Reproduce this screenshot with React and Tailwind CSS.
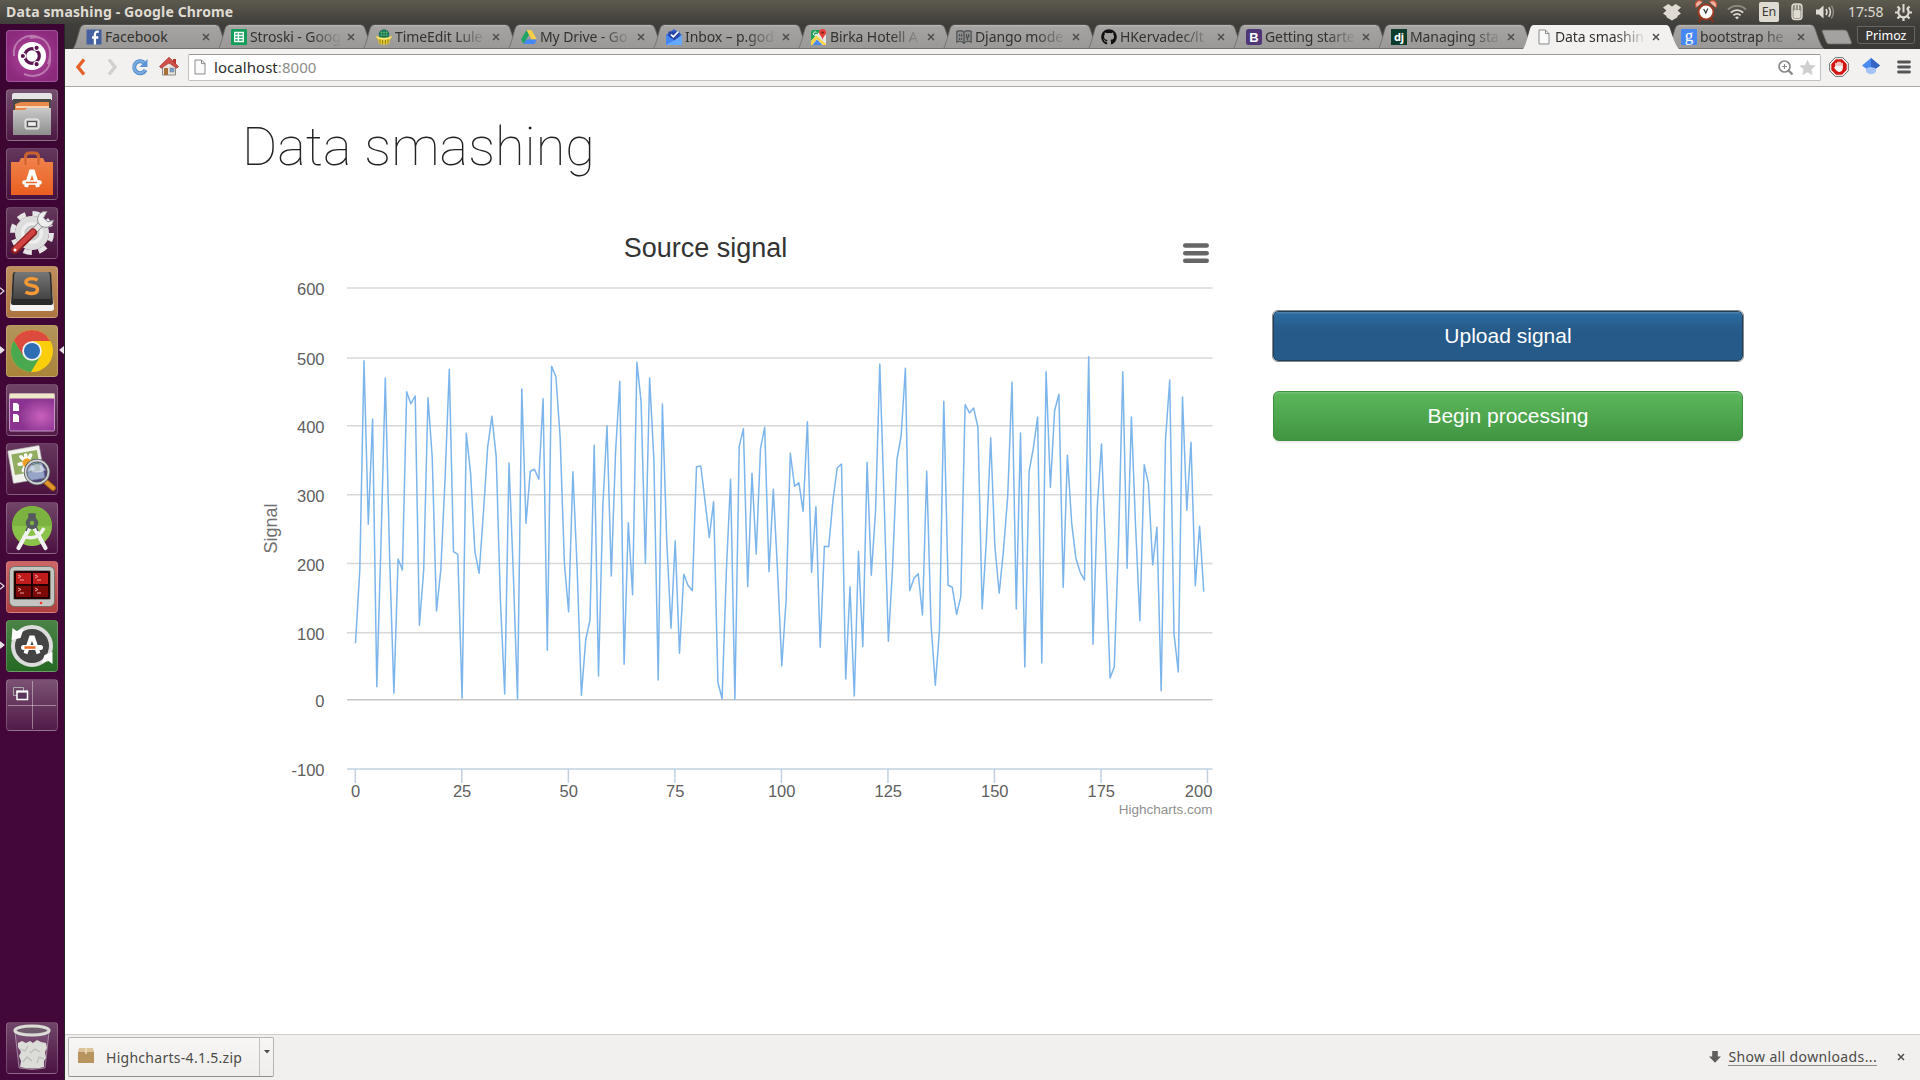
import React from "react";
import { FaGithub } from "react-icons/fa";

const SERIES = [
  910, 690, 62, 553, 237, 1040, 600, 114, 650, 1060, 657, 690, 155, 191, 168, 856, 690, 173, 350, 813,
  690, 420, 88, 635, 643, 1075, 280, 400, 635, 700, 520, 320, 229, 350, 780, 1062, 369, 690, 1077, 147,
  550, 394, 388, 418, 176, 931, 79, 110, 290, 670, 815, 395, 690, 1066, 900, 840, 316, 1008, 500, 257,
  708, 340, 124, 973, 548, 764, 67, 185, 670, 114, 360, 1020, 192, 600, 865, 602, 940, 703, 736, 752,
  380, 378, 485, 592, 485, 1027, 1076, 690, 418, 1078, 320, 266, 740, 400, 642, 325, 262, 695, 448, 690,
  977, 780, 340, 439, 428, 514, 245, 697, 500, 922, 619, 620, 480, 384, 372, 1017, 740, 1068, 634, 920,
  367, 706, 510, 72, 480, 904, 680, 360, 285, 85, 752, 715, 701, 825, 394, 850, 1036, 870, 184, 736,
  742, 823, 770, 194, 219, 204, 262, 806, 600, 293, 620, 760, 630, 470, 127, 807, 279, 981, 394, 325,
  231, 969, 95, 442, 212, 163, 742, 346, 550, 655, 697, 720, 50, 913, 500, 312, 650, 1014, 980, 600,
  95, 685, 231, 560, 842, 374, 430, 675, 562, 1052, 300, 120, 880, 996, 171, 511, 307, 737, 559, 755,
];

const GRID = [
  ["600", 288],
  ["500", 358],
  ["400", 425.7],
  ["300", 494.7],
  ["200", 563.5],
  ["100", 632.7],
  ["0", 699.7],
];

function Chart() {
  const points = SERIES.map((v, i) => `${(355.5 + i * 4.263).toFixed(1)},${(340 + v / 3).toFixed(1)}`).join(" ");
  return (
    <svg width="985" height="600" viewBox="242 225 985 600" className="block font-['Liberation_Sans',Arial,sans-serif]">
      <text x="705.5" y="257" textAnchor="middle" fontSize="27" fill="#333">Source signal</text>
      <g stroke="#666" strokeWidth="4.5" strokeLinecap="round">
        <path d="M1185.2 245.6h21.5M1185.2 253.200h21.500M1185.200 260.800h21.500" />
      </g>
      {GRID.map(([label, y]) => (
        <g key={label}>
          <path d={`M347 ${y}H1212.6`} stroke={label === "0" ? "#c6c6c6" : "#d8d8d8"} strokeWidth="1.5" />
          <text x="324.5" y={y + 7.3} textAnchor="end" fontSize="16.5" fill="#606060">{label}</text>
        </g>
      ))}
      <text x="324.5" y="776" textAnchor="end" fontSize="16.5" fill="#606060">-100</text>
      <path d="M347 769H1212.6" stroke="#c0d0e0" strokeWidth="1.5" />
      {[0, 25, 50, 75, 100, 125, 150, 175, 200].map((v) => (
        <g key={v}>
          <path d={`M${355.3 + v * 4.261} 769v14`} stroke="#c0d0e0" strokeWidth="1.5" />
          <text
            x={v === 200 ? 1212.4 : 355.6 + v * 4.261}
            y="796.7"
            textAnchor={v === 200 ? "end" : "middle"}
            fontSize="16.5"
            fill="#606060"
          >
            {v}
          </text>
        </g>
      ))}
      <text transform="translate(276.500 528.5) rotate(-90)" textAnchor="middle" fontSize="18" fill="#707070">Signal</text>
      <text x="1212.6" y="814" textAnchor="end" fontSize="13.5" fill="#909090">Highcharts.com</text>
      <polyline points={points} fill="none" stroke="#7cb5ec" strokeWidth="1.5" strokeLinejoin="round" />
    </svg>
  );
}

/* ---------- favicons ---------- */
const Fav = ({ children }) => (
  <svg width="16" height="16" viewBox="0 0 16 16" className="shrink-0">{children}</svg>
);
const PageIcon = () => (
  <Fav>
    <path d="M3 1h6.5L13 4.6V15H3z" fill="#fafafa" stroke="#8b8b8b" />
    <path d="M9.5 1v3.6H13" fill="none" stroke="#8b8b8b" />
  </Fav>
);
const FacebookIcon = () => (
  <Fav>
    <rect x=".5" y=".5" width="15" height="15" fill="#4460a0" />
    <path d="M12.800 2.800C9.800 2.300 8.900 3.500 8.900 5.800V15.500M6 8.500h6.300" fill="none" stroke="#fff" strokeWidth="2.300" />
  </Fav>
);
const SheetsIcon = () => (
  <Fav>
    <rect width="16" height="16" rx="1" fill="#129d58" />
    <path d="M3.700 3.500h8.600v9H3.700zM3.700 6.500h8.600M3.700 9.500h8.600M7.400 3.500v9" fill="none" stroke="#fff" strokeWidth="1.300" />
  </Fav>
);
const TimeEditIcon = () => (
  <Fav>
    <circle cx="8" cy="5.500" r="5.300" fill="#16705c" />
    <path d="M4 3.500h8M3.500 6h9M8 1v7M5.500 1.500v6M10.500 1.500v6" stroke="#6cc76a" strokeWidth=".5" />
    <path d="M0 6.500c4 3 12 3 16 0-.3 2.500-1.500 4-2.500 4.500V14c-2 2.300-9 2.300-11 0v-3C1.500 10.500.3 9 0 6.500z" fill="#e9cf34" />
    <path d="M4 10.500v4M6.600 11v4M9.400 11v4M12 10.500v4" stroke="#7c6d10" strokeWidth=".9" />
    <path d="M1 8c4 2.400 10 2.400 14 0" stroke="#fff6a0" fill="none" />
  </Fav>
);
const DriveIcon = () => (
  <Fav>
    <path d="M5.400 1.200h5.200L16 10.400h-5.200z" fill="#ffcf48" />
    <path d="M5.400 1.200L8 5.700 2.700 15 0 10.400z" fill="#1da362" />
    <path d="M5.300 10.400H16L13.400 15H2.700z" fill="#4587f4" />
  </Fav>
);
const InboxIcon = () => (
  <Fav>
    <path d="M0 6L8 0l8 6-8 6z" fill="#3367d6" />
    <path d="M2.500 2.500h11v6.500L8 13 2.500 9z" fill="#2748a8" />
    <path d="M0 6l8 5.500L16 6v10H0z" fill="#64a8fa" />
    <path d="M0 6l8 5.500L0 16z" fill="#4285f4" />
    <path d="M5 5.500l2.300 2.300L12.500 2.500" fill="none" stroke="#fff" strokeWidth="1.700" />
  </Fav>
);
const MapsIcon = () => (
  <Fav>
    <rect y="1" width="15" height="15" rx="1.500" fill="#e8e8e8" />
    <path d="M0 2.500Q0 1 1.500 1H10L0 12z" fill="#24a05a" />
    <path d="M0 12L5.500 6.500 15 15v1H12L6 10 1.500 16H0z" fill="#ffd447" />
    <path d="M1.500 16L6 10.500 11.500 16z" fill="#4a88f0" />
    <path d="M11.600 0a3.600 3.600 0 0 1 3.600 3.600c0 2.500-3 3.900-3.600 7.400-.6-3.500-3.600-4.900-3.600-7.400A3.600 3.600 0 0 1 11.600 0z" fill="#e5433a" />
    <circle cx="11.600" cy="3.600" r="1.200" fill="#7c1a16" />
    <path d="M5.500 3.500a1.800 1.800 0 1 0 .3 2H4.200" fill="none" stroke="#fff" strokeWidth=".9" />
  </Fav>
);
const BookIcon = () => (
  <Fav>
    <path d="M.8 2.500C3 1.500 6 1.500 8 3c2-1.500 5-1.500 7.200-.5V13c-2.200-1-5.200-.5-7.200 1-2-1.500-5-2-7.200-1z" fill="#8d8d8c" stroke="#57595b" strokeWidth="1.400" />
    <path d="M8 3v12M3.500 5v2.500M5.500 5v2.500M3.500 9v2M5.500 9v2M10.500 5v3l1 1v2.500M12.700 5v2.500l-1 1" fill="none" stroke="#4b4d4f" strokeWidth="1.200" />
  </Fav>
);
const BootstrapIcon = () => (
  <Fav>
    <rect width="16" height="16" rx="2.500" fill="#4f3677" />
    <text x="8" y="12.800" fontSize="13" fontWeight="bold" textAnchor="middle" fill="#fff" fontFamily="Liberation Sans">B</text>
  </Fav>
);
const DjangoIcon = () => (
  <Fav>
    <rect width="16" height="16" fill="#0c3c2b" />
    <text x="8" y="11.800" fontSize="11" fontWeight="bold" textAnchor="middle" fill="#fff" fontFamily="Noto Sans">dj</text>
  </Fav>
);
const GoogleIcon = () => (
  <Fav>
    <rect width="16" height="16" rx="1" fill="#4787f3" />
    <text x="8" y="11.500" fontSize="17" textAnchor="middle" fill="#fff" fontFamily="Liberation Serif">g</text>
  </Fav>
);

const TABS = [
  { title: "Facebook", icon: <FacebookIcon /> },
  { title: "Stroski - Goog", icon: <SheetsIcon /> },
  { title: "TimeEdit Lule", icon: <TimeEditIcon /> },
  { title: "My Drive - Go", icon: <DriveIcon /> },
  { title: "Inbox – p.god", icon: <InboxIcon /> },
  { title: "Birka Hotell A", icon: <MapsIcon /> },
  { title: "Django mode", icon: <BookIcon /> },
  { title: "HKervadec/lt", icon: <FaGithub className="size-4 shrink-0 text-[#111]" /> },
  { title: "Getting starte", icon: <BootstrapIcon /> },
  { title: "Managing sta", icon: <DjangoIcon /> },
  { title: "Data smashin", icon: <PageIcon />, active: true },
  { title: "bootstrap he", icon: <GoogleIcon /> },
];

function CloseX({ className }) {
  return (
    <svg width="8" height="8" viewBox="0 0 8 8" className={className}>
      <path d="M1 1l6 6M7 1L1 7" stroke="#4e4d4b" strokeWidth="1.500" />
    </svg>
  );
}

function Tab({ title, icon, active }) {
  return (
    <div className={active ? "relative z-10 -mr-[11px] h-[25px] w-[156px] shrink-0" : "relative -mr-[11px] h-[25px] w-[156px] shrink-0"}>
      <svg width="156" height="25" viewBox="0 0 156 25" className="absolute inset-0">
        <defs>
          <linearGradient id="tabfill" x2="0" y2="1">
            <stop offset="0" stopColor="#a5a4a2" />
            <stop offset="1" stopColor="#999896" />
          </linearGradient>
        </defs>
        <path
          d="M0 25C3 22 6 7 7.500 3.500 8.500 1.500 9.500 1 11.500 1h131c2 0 3 .5 4 2.500C148 7 152 22 156 25z"
          fill={active ? "#f2f1f0" : "url(#tabfill)"}
          stroke={active ? "none" : "#6b6a67"}
          strokeWidth=".8"
        />
        {!active && <path d="M11 1.700h132" stroke="#c4c3c1" strokeWidth=".9" />}
        {!active && <path d="M0 24.500h156" stroke="#73726e" />}
      </svg>
      <div className="relative flex h-full items-center pt-px pl-[13px]">
        {icon}
        <span
          className={
            title === "Facebook"
              ? "ml-[3px] w-[92px] text-[14px] leading-5 whitespace-nowrap text-[#33322e]"
              : "ml-[3px] w-[92px] text-[14px] leading-5 tracking-[-0.1px] whitespace-nowrap text-[#33322e] [mask-image:linear-gradient(to_right,#000_66%,transparent)]"
          }
        >
          {title}
        </span>
        <CloseX className="ml-[5px]" />
      </div>
    </div>
  );
}

/* ---------- launcher ---------- */
const ICONS = {
  dash: (
    <>
      <path d="M8 26C6 10 22 2 34 8M44 26c2 15-12 24-26 18M24 8C40 4 48 18 42 34" fill="none" stroke="#fff" strokeOpacity=".35" strokeWidth="2" />
      <circle cx="26" cy="26" r="14" fill="#fff" />
      <circle cx="26" cy="26" r="7.300" fill="none" stroke="#5e1452" strokeWidth="3.200" />
      <g fill="#5e1452" stroke="#fff" strokeWidth="1.200">
        <circle cx="16.800" cy="26" r="2.700" />
        <circle cx="30.600" cy="17.800" r="2.700" />
        <circle cx="30.600" cy="34.200" r="2.700" />
      </g>
    </>
  ),
  files: (
    <>
      <path d="M6 6q0-2 2-2h36q2 0 2 2v5H6z" fill="#e4e4e4" />
      <path d="M7 10h38v14H7z" fill="#4a4a48" />
      <path d="M9 15l6-2h28v10H9z" fill="#e8894a" />
      <path d="M10 18h33" stroke="#fff0dc" strokeWidth="1.500" />
      <path d="M7 21h12l2-2h24v27H7z" fill="url(#silver)" />
      <rect x="19" y="30" width="14" height="10" rx="2" fill="#ccc" stroke="#eee" />
      <rect x="21.500" y="32.500" width="9" height="5" fill="#eee" stroke="#555" strokeWidth="1.300" />
    </>
  ),
  software: (
    <>
      <path d="M19.500 17V9q0-4 4-4h5q4 0 4 4v8" fill="none" stroke="#d0693a" strokeWidth="3" />
      <path d="M5 14h8l2-4h22l2 4h8v33H5z" fill="url(#bag)" />
      <path d="M19.500 17V9q0-4 4-4h5q4 0 4 4v8" fill="none" stroke="#c9602c" strokeWidth="1.800" />
      <path d="M20 39L25 23.500h2L32 39" fill="none" stroke="#fff" strokeWidth="4" />
      <path d="M18.500 34.500h15" stroke="#fff" strokeWidth="4.600" strokeLinecap="round" />
      <path d="M20 34.500h11" stroke="#e9662c" strokeWidth="1.500" />
    </>
  ),
  settings: (
    <>
      <circle cx="26" cy="26" r="19.500" fill="none" stroke="#e4e4e4" strokeWidth="5" strokeDasharray="8.300 7" />
      <circle cx="26" cy="26" r="14" fill="#eee" stroke="#ddd" strokeWidth="6" />
      <circle cx="26" cy="26" r="7" fill="#cfcfcf" stroke="#bbb" />
      <path d="M27 25L39 13" stroke="#8f8f8f" strokeWidth="6.500" />
      <path d="M27 25L39 13" stroke="#e6e6e6" strokeWidth="4.800" />
      <path d="M41 4.500a8 8 0 1 0 6.500 8.500l-5.500 2-4.500-4z" fill="#efefef" stroke="#8f8f8f" />
      <path d="M9 43L27 25.500" stroke="#8e1f1f" strokeWidth="8" strokeLinecap="round" />
      <path d="M9.500 42L27 25" stroke="#d04343" strokeWidth="5" strokeLinecap="round" />
      <circle cx="9" cy="43" r="1.500" fill="#fff" />
    </>
  ),
  sublime: (
    <>
      <path d="M7 12L4 42q0 3 3 3h38q3 0 3-3L45 12z" fill="#f3f3f3" />
      <path d="M9 6h34q2 0 2.200 2l1.800 29q0 2-2 2H7q-2 0-2-2L6.800 8q.2-2 2.200-2z" fill="#2b2b2b" />
      <path d="M10.500 6h31q2 0 2.200 2l1.300 25H7L8.300 8q.2-2 2.200-2z" fill="url(#key)" />
      <path d="M31.500 14c-5-2.500-12-1.500-11.500 2.500.5 4.500 11.500 1.500 11.500 7 0 4.500-7.500 5-12 2.500" fill="none" stroke="#f79a35" strokeWidth="3.400" />
    </>
  ),
  chrome: (
    <>
      <circle cx="26" cy="26" r="21" fill="#fbce0b" />
      <path d="M26 5A21 21 0 0 0 7.800 15.500L17 31.500 26 16h18.200A21 21 0 0 0 26 5z" fill="#dd4b3e" />
      <path d="M7.800 15.500A21 21 0 0 0 25 47l9.500-16L26 26l-8.500 5z" fill="#4aa84e" />
      <circle cx="26" cy="26" r="9.800" fill="#f4f4f4" />
      <circle cx="26" cy="26" r="8" fill="#2f6db5" />
    </>
  ),
  desktop: (
    <>
      <rect x="3.500" y="10" width="45" height="37" rx="1.500" fill="url(#screen)" stroke="#c79acb" />
      <path d="M3.500 9.500h45v5h-45z" fill="#ece8c8" />
      <path d="M7 19h4l2 2v6H7zM7 30h4l2 2v6H7z" fill="#fff" />
    </>
  ),
  viewer: (
    <>
      <g transform="rotate(-10 20 20)">
        <rect x="4" y="5" width="32" height="33" rx="1" fill="#f2f2ee" stroke="#aaa" strokeWidth=".6" />
        <rect x="7" y="9" width="26" height="21" fill="#93ad62" />
        <g stroke="#fff" strokeWidth="3.500" strokeLinecap="round">
          <path d="M13 20h17M16 13l10 14M26 13L16 27M21 12v16" />
        </g>
        <circle cx="21" cy="20" r="4.500" fill="#f0a020" />
      </g>
      <path d="M39 38l8 7" stroke="#9a5a10" strokeWidth="6" strokeLinecap="round" />
      <path d="M39 38l8 7" stroke="#e0952e" strokeWidth="4" strokeLinecap="round" />
      <circle cx="31" cy="29" r="11.500" fill="#4a65a8" fillOpacity=".55" stroke="#55585c" strokeWidth="3.400" />
      <circle cx="31" cy="29" r="11.500" fill="none" stroke="#d0d3d6" strokeWidth="1.800" />
      <path d="M22 27q9-12 18 0-9 5-18 0z" fill="#fff" fillOpacity=".5" />
    </>
  ),
  studio: (
    <>
      <circle cx="26" cy="24" r="20" fill="#8bc34a" />
      <path d="M6 24a20 20 0 0 1 40 0z" fill="#7cb23f" />
      <path d="M23.500 26L12.500 46M28.500 26l11 20" stroke="#f1f1f1" strokeWidth="4.200" strokeLinecap="round" />
      <path d="M17 34q14 6 21-8" fill="none" stroke="#f1f1f1" strokeWidth="3.500" />
      <path d="M23 12h6v5h-6zM22 24l-2 5M30 24l2 5" fill="#54595f" stroke="#54595f" strokeWidth="1.500" />
      <circle cx="26" cy="21" r="4.200" fill="#7cb23f" stroke="#54595f" strokeWidth="4" />
    </>
  ),
  terminator: (
    <>
      <rect x="3.500" y="5.500" width="45" height="40" rx="5" fill="#c4c4c0" stroke="#70706c" />
      <rect x="7.500" y="9.500" width="37" height="29" rx="1.500" fill="#200" stroke="#8a8a86" />
      <path d="M10 12h15v11H10zM27 12h15v11H27z" fill="#c01c1c" />
      <path d="M10 25h15v11H10zM27 25h15v11H27z" fill="#7c0808" />
      <path d="M12 14l3 1.500L12 17M14 19h4M29 14l3 1.500L29 17M31 19h4M12 27l3 1.500L12 30M14 32h4M29 27l3 1.500L29 30M31 32h4" fill="none" stroke="#f6a0a0" />
      <circle cx="35" cy="42" r="1.300" fill="#f33" />
    </>
  ),
  updater: (
    <>
      <circle cx="26" cy="26" r="19" fill="#444" stroke="#dcdcdc" strokeWidth="4" />
      <path d="M5.500 20l1-12 4 3 7-2-3 9zM46.500 32v12l-4-3-7 2 3-8z" fill="#fff" />
      <path d="M19.500 33.500L25 17.500h2L32.500 33.500" fill="none" stroke="#fff" strokeWidth="4" />
      <path d="M17.500 27.500h17" stroke="#fff" strokeWidth="5" strokeLinecap="round" />
      <path d="M18.500 27.500h11" stroke="#f26a21" strokeWidth="2.600" />
    </>
  ),
  workspaces: (
    <>
      <path d="M26.500 2v48M2 26.500h48" stroke="#fff" strokeOpacity=".4" />
      <path d="M7.500 8.500h10v8h-10z" fill="#6a4567" stroke="#aaa" />
      <path d="M11 12.500h10.500v8H11z" fill="#5b3559" stroke="#fff" strokeWidth="1.500" />
      <path d="M10.500 12.500h11.500" stroke="#fff" strokeWidth="2" />
    </>
  ),
  trash: (
    <>
      <path d="M9 10h34l-4 36q-13 3-26 0z" fill="#fff" fillOpacity=".1" stroke="#fff" strokeOpacity=".4" />
      <path d="M12 21l4-2 4 2 4-2 3 2 4-3 4 2 5 1 1 5-2 4 1 6-2 3 0 6q-11 3-24 0l1-6-2-5 2-4-3-5z" fill="#dcdcd8" />
      <path d="M14 27l5 2 3-5M17 40l4-5 5 4M24 31l5-4 5 3M31 41l2-6 5 2" fill="none" stroke="#bcbcb8" strokeWidth="1.300" />
      <ellipse cx="26" cy="8.500" rx="17" ry="4.500" fill="#6f5d6d" stroke="#dcdcd6" strokeWidth="3.200" />
    </>
  ),
};

const LAUNCHER = [
  { id: "dash", bg: "bg-[radial-gradient(circle,#b84ba3,#8c2a7c_75%)]" },
  { id: "files", bg: "bg-linear-to-b from-white/30 to-white/8" },
  { id: "software", bg: "bg-linear-to-b from-white/20 to-white/5" },
  { id: "settings", bg: "bg-linear-to-b from-white/20 to-white/5" },
  { id: "sublime", bg: "bg-linear-to-b from-[#c08f5e] to-[#ab7440]", left: "open" },
  { id: "chrome", bg: "bg-linear-to-b from-[#b3945c] to-[#a98539]", left: "full", right: true },
  { id: "desktop", bg: "bg-linear-to-b from-white/25 to-white/8" },
  { id: "viewer", bg: "bg-linear-to-b from-white/20 to-white/5" },
  { id: "studio", bg: "bg-linear-to-b from-white/25 to-white/5" },
  { id: "terminator", bg: "bg-linear-to-b from-[#cc6664] to-[#b04040]", left: "open" },
  { id: "updater", bg: "bg-linear-to-b from-[#4b8347] to-[#256a22]", left: "full" },
  { id: "workspaces", bg: "bg-linear-to-b from-white/30 to-white/8" },
];

function Tile({ id, bg, left, right }) {
  return (
    <div className="relative flex h-[52px] w-full shrink-0 pl-1.5">
      {left && (
        <svg width="5" height="8" viewBox="0 0 5 8" className="absolute top-[21px] left-0">
          <path d="M0 .7L4 4 0 7.300" fill={left === "full" ? "#e8e4e8" : "none"} stroke="#e8e4e8" strokeWidth="1.100" />
        </svg>
      )}
      <div className={`size-[52px] overflow-hidden rounded-[4px] border border-white/20 ${bg}`}>
        <svg width="52" height="52" viewBox="0 0 52 52" className="-mt-px -ml-px">{ICONS[id]}</svg>
      </div>
      {right && (
        <svg width="5" height="8" viewBox="0 0 5 8" className="absolute top-[21px] left-[59px]">
          <path d="M5 0L0 4l5 4z" fill="#e8e4e8" />
        </svg>
      )}
    </div>
  );
}

function Launcher() {
  return (
    <aside className="flex w-[65px] shrink-0 flex-col justify-between border-r border-[#2a2328] bg-linear-to-b from-[#3b0531] via-[#430738] to-[#420839] pt-1.5 pb-1.5">
      <svg width="0" height="0" className="absolute">
        <defs>
          <linearGradient id="silver" x2="0" y2="1"><stop stopColor="#c9c9c9" /><stop offset="1" stopColor="#8e8e8e" /></linearGradient>
          <linearGradient id="bag" x2="0" y2="1"><stop stopColor="#f0824b" /><stop offset="1" stopColor="#e95f20" /></linearGradient>
          <linearGradient id="key" x2="0" y2="1"><stop stopColor="#777" /><stop offset="1" stopColor="#444" /></linearGradient>
          <radialGradient id="screen" cx=".7" cy=".6"><stop stopColor="#c862be" /><stop offset="1" stopColor="#8a3390" /></radialGradient>
        </defs>
      </svg>
      <div className="flex flex-col gap-[7px]">
        {LAUNCHER.map((t) => <Tile key={t.id} {...t} />)}
      </div>
      <Tile id="trash" bg="bg-linear-to-b from-white/25 to-white/5" />
    </aside>
  );
}

/* ---------- top panel ---------- */
function TopPanel() {
  return (
    <header className="flex h-6 shrink-0 items-center justify-between bg-linear-to-b from-[#5d5a50] to-[#403f3a] pr-2 pl-1.5 text-[#dfdbd2]">
      <span className="text-[14px] leading-6 font-bold tracking-[0.14px]">Data smashing - Google Chrome</span>
      <div className="flex items-center">
        <svg width="18" height="18" viewBox="0 0 18 18" className="mr-[14px]">
          <path d="M5.200 1L9 3.600 12.800 1 18 4.600 14.600 7.600 18 10.600 14.500 13v1.200L9 17.500l-5.500-3.300V13L0 10.600l3.400-3L0 4.600z" fill="#dfdbd2" />
        </svg>
        <svg width="22" height="24" viewBox="0 0 22 24" className="mr-2.5">
          <path d="M1.500 7.500a4 4 0 0 1 6-5.500M20.500 7.500a4 4 0 0 0-6-5.500" fill="#f3b0a0" stroke="#c4523a" strokeWidth="1.300" />
          <path d="M6 18l-2 4M16 18l2 4" stroke="#8c2f1d" strokeWidth="2" />
          <circle cx="11" cy="12" r="7.500" fill="#fff" stroke="#9c3a22" strokeWidth="2" />
          <path d="M8.700 9l2.100 4 2-4.500" fill="none" stroke="#333" strokeWidth="1.200" />
        </svg>
        <svg width="20" height="16" viewBox="0 0 20 16" className="mr-3">
          <g fill="none" strokeWidth="1.900">
            <path d="M1 5.500a13 13 0 0 1 18 0" stroke="#8f8c84" />
            <path d="M3.800 8.600a9 9 0 0 1 12.400 0" stroke="#dfdbd2" />
            <path d="M6.400 11.400a5.200 5.200 0 0 1 7.200 0" stroke="#dfdbd2" />
          </g>
          <path d="M8 13.300q2-1.600 4 0l-2 2.200z" fill="#dfdbd2" />
        </svg>
        <span className="flex h-5 w-5 items-center justify-center rounded-[2px] bg-[#dfdbd2] text-[12.500px] text-[#3c3b37]">En</span>
        <svg width="12" height="18" viewBox="0 0 12 18" className="mx-3">
          <rect x="1" y="1" width="10" height="15.500" rx="3" fill="#8b887f" stroke="#dfdbd2" strokeWidth="1.400" />
          <rect x="2.500" y="7" width="7" height="8" rx="1.500" fill="#dfdbd2" />
          <path d="M4.500 1.500v5M7.500 1.500v5" stroke="#dfdbd2" strokeWidth="1.200" />
        </svg>
        <svg width="20" height="16" viewBox="0 0 20 16" className="mr-[13px]">
          <path d="M1 5.500h3L8.500 1.500v13L4 10.500H1z" fill="#dfdbd2" />
          <path d="M11 5q2 3 0 6M13.800 3.200q3.200 4.800 0 9.600" fill="none" stroke="#dfdbd2" strokeWidth="1.600" />
          <path d="M16.400 1.500q4 6.500 0 13" fill="none" stroke="#8f8c84" strokeWidth="1.400" />
        </svg>
        <span className="mr-[11px] w-[36px] text-[14px] leading-6 tracking-[-0.100px]">17:58</span>
        <svg width="17" height="17" viewBox="0 0 17 17">
          <path d="M5.200 4.200a5.200 5.200 0 1 0 6.600 0" fill="none" stroke="#dfdbd2" strokeWidth="2.200" />
          <path d="M8.500 0v8.500" stroke="#dfdbd2" strokeWidth="2" />
          <path d="M2.800 8.500H0M14.200 8.500H17M4.500 12.500l-2 2M12.500 12.500l2 2M8.500 14v3M4.500 4.500l-2-2M12.500 4.500l2-2" stroke="#dfdbd2" strokeWidth="2.200" />
        </svg>
      </div>
    </header>
  );
}

function TabStrip() {
  return (
    <div className="flex h-[25px] shrink-0 items-start bg-linear-to-b from-[#3f3e3a] to-[#3a3935] pl-2">
      {TABS.map((t) => <Tab key={t.title} {...t} />)}
      <svg width="32" height="16" viewBox="0 0 32 16" className="mt-[5px] ml-[8px] shrink-0">
        <path d="M1 2q0-1 1.500-1h21q2 0 3 2l4 10.500q0 1.500-1.500 1.500H8q-2 0-2.700-2z" fill="#a3a2a0" stroke="#6b6a67" strokeWidth=".8" />
      </svg>
      <div className="mt-0.5 mr-[5px] ml-auto flex h-[18px] w-[58px] shrink-0 items-center justify-center rounded-b-[3px] border border-[#66655f] bg-[#3a3936] pt-0.5 text-[12.500px] text-white">
        Primoz
      </div>
    </div>
  );
}

function Toolbar() {
  return (
    <div className="flex h-[38px] shrink-0 items-center border-b border-[#a9a8a6] bg-[#f2f1f0] pb-px pl-2">
      <svg width="16" height="18" viewBox="0 0 16 18">
        <path d="M11 1.500L5 9l6 7.500" fill="none" stroke="#e4622a" strokeWidth="3.400" />
      </svg>
      <svg width="16" height="18" viewBox="0 0 16 18" className="ml-[15px]">
        <path d="M5 1.500L11 9 5 16.500" fill="none" stroke="#d2d0cd" strokeWidth="3.400" />
      </svg>
      <svg width="18" height="18" viewBox="0 0 18 18" className="ml-[11px]">
        <path d="M14.500 12A6 6 0 1 1 13 4.500" fill="none" stroke="#4f87c6" strokeWidth="4" />
        <path d="M14.300 12A6 6 0 1 1 13 4.500" fill="none" stroke="#79ade2" strokeWidth="2.200" />
        <path d="M16.500 1v8H8.500z" fill="#5b95d3" />
      </svg>
      <svg width="20" height="20" viewBox="0 0 20 20" className="ml-[10px]">
        <path d="M3.500 9.500L10 3.500l6.500 6V18h-13z" fill="#e9e6df" stroke="#8c8a85" />
        <path d="M14 2h3v6h-3z" fill="#b93a33" />
        <path d="M10 .3L19.500 9.500l-1.600 1.700L10 6 2.100 11.200.5 9.500z" fill="#d2504a" stroke="#a4322d" strokeWidth=".7" />
        <rect x="5" y="11" width="4" height="7" fill="#a5703a" />
        <rect x="11" y="11" width="4" height="4" fill="#6fa0d6" stroke="#888" strokeWidth=".6" />
      </svg>
      <div className="ml-[9px] flex h-[27px] w-[1633px] items-center rounded-[2px] border border-[#c3c2c0] border-t-[#999897] bg-white pr-[4px] pl-[3px]">
        <PageIcon />
        <span className="ml-1.5 text-[15px] leading-6 tracking-[0.05px] text-[#2e2d2b]">
          localhost<span className="text-[#8d8d8d]">:8000</span>
        </span>
        <svg width="17" height="17" viewBox="0 0 17 17" className="mr-[5px] ml-auto">
          <circle cx="7.500" cy="7.500" r="5.500" fill="none" stroke="#8a8a8a" strokeWidth="1.700" />
          <path d="M7.500 5v5M5 7.500h5" stroke="#8a8a8a" strokeWidth="1.200" />
          <path d="M11.500 11.500l4 4" stroke="#8a8a8a" strokeWidth="2.400" />
        </svg>
        <svg width="17" height="17" viewBox="0 0 17 17">
          <path d="M8.500.5l2.400 5.400 5.900.6-4.400 3.900 1.300 5.800-5.200-3-5.200 3 1.300-5.800L.2 6.500l5.900-.6z" fill="#cfcfcf" />
        </svg>
      </div>
      <svg width="20" height="20" viewBox="0 0 20 20" className="ml-[8px]">
        <path d="M6.200.7h7.600l5.500 5.500v7.600l-5.500 5.500H6.200L.7 13.800V6.200z" fill="#fff" stroke="#555" strokeWidth=".9" />
        <path d="M6.900 2.300h6.200l4.600 4.600v6.200l-4.600 4.600H6.900l-4.600-4.600V6.900z" fill="#d3160f" />
        <path d="M7 10V6.600M9 9.500V5.200M11 9.500V5.200M13 10V6.500" stroke="#fff" strokeWidth="1.500" strokeLinecap="round" />
        <path d="M6.300 9h7.400v3q-.5 2.800-3.200 3-2.500 0-5.500-4.500.5-1 1.300-.2z" fill="#fff" />
      </svg>
      <svg width="18" height="20" viewBox="0 0 18 20" className="ml-[13px]">
        <path d="M9 7l5 2.500v5.500q-5 4.500-10 0V9.500z" fill="#a6c3f7" />
        <path d="M9 1l9 7.500-4 3q-5-3-10 0l-4-3z" fill="#4a8af0" />
        <path d="M9 1v9q3 0 5 1.500l4-3z" fill="#3664c4" />
      </svg>
      <svg width="14" height="14" viewBox="0 0 14 14" className="ml-[17px]">
        <path d="M1.500 2h11M1.500 7h11M1.500 12h11" stroke="#555" strokeWidth="2.800" strokeLinecap="round" />
      </svg>
    </div>
  );
}

function DownloadBar() {
  return (
    <footer className="flex h-[46px] shrink-0 items-center border-t border-[#cfcecc] bg-[#f1f0ef] pr-[15px] pb-px pl-[3px] text-[14px] text-[#4c4b48]">
      <div className="flex h-10 w-[206px] rounded-[2px] border border-[#b5b4b2] border-b-[#8f8e8c] bg-linear-to-b from-[#f7f6f5] to-[#efeeec]">
        <div className="flex w-[191px] items-center border-r border-[#c1c0be] pl-[9px]">
          <svg width="16" height="15" viewBox="0 0 16 15" className="-mt-1">
            <path d="M1.500 0h13L16 4v11H0V4z" fill="#c7a877" />
            <path d="M0 4h16v11H0z" fill="#b8955f" />
            <path d="M1.500 0h13L16 4H0z" fill="#dcc399" />
            <path d="M8 0v6" stroke="#efe0c4" strokeWidth="1.500" />
          </svg>
          <span className="ml-3 tracking-[0.020em]">Highcharts-4.1.5.zip</span>
        </div>
        <div className="flex flex-1 justify-center pt-3">
          <svg width="6" height="4" viewBox="0 0 6 4"><path d="M0 0h6L3 3.500z" fill="#4c4b48" /></svg>
        </div>
      </div>
      <svg width="12" height="12" viewBox="0 0 12 12" className="ml-auto">
        <path d="M3.200 0h5.600v5.500H12L6 11.800 0 5.500h3.200z" fill="#5f5e5c" />
      </svg>
      <span className="mr-5 ml-[7px] border-b border-[#8c8b88] leading-[17px] tracking-[0.37px]">Show all downloads...</span>
      <CloseX />
    </footer>
  );
}

export default function App() {
  return (
    <div className="flex h-[1080px] w-[1920px] flex-col overflow-hidden bg-white font-['Noto_Sans',sans-serif]">
      <TopPanel />
      <div className="flex min-h-0 flex-1">
        <Launcher />
        <div className="flex min-w-0 flex-1 flex-col">
          <TabStrip />
          <Toolbar />
          <main className="flex flex-1 flex-col bg-white pl-[177px]">
            <h1 className="mt-[30px] font-['Roboto',sans-serif] text-[54px] leading-[60px] font-thin text-[#222]">Data smashing</h1>
            <div className="mt-[48px] flex">
              <Chart />
              <div className="mt-[86px] ml-[46px] flex w-[470px] flex-col gap-[30px] font-['Liberation_Sans',Arial,sans-serif] text-[21px] text-white [text-shadow:0_-1px_0_rgba(0,0,0,0.2)]">
                <button className="h-[50px] rounded-[5px] border-[1.500px] border-[#1f3f5c] bg-linear-to-b from-[#2d6ca2] to-[#265a88] to-40% shadow-[inset_0_1.500px_0_rgba(255,255,255,0.15)] outline outline-[#8a8a8a]">
                  Upload signal
                </button>
                <button className="h-[50px] rounded-[6px] border-[1.500px] border-[#3e8f3e] bg-linear-to-b from-[#5cb85c] to-[#419641] shadow-[inset_0_1.500px_0_rgba(255,255,255,0.15),0_1.500px_1.500px_rgba(0,0,0,0.075)]">
                  Begin processing
                </button>
              </div>
            </div>
          </main>
          <DownloadBar />
        </div>
      </div>
    </div>
  );
}
